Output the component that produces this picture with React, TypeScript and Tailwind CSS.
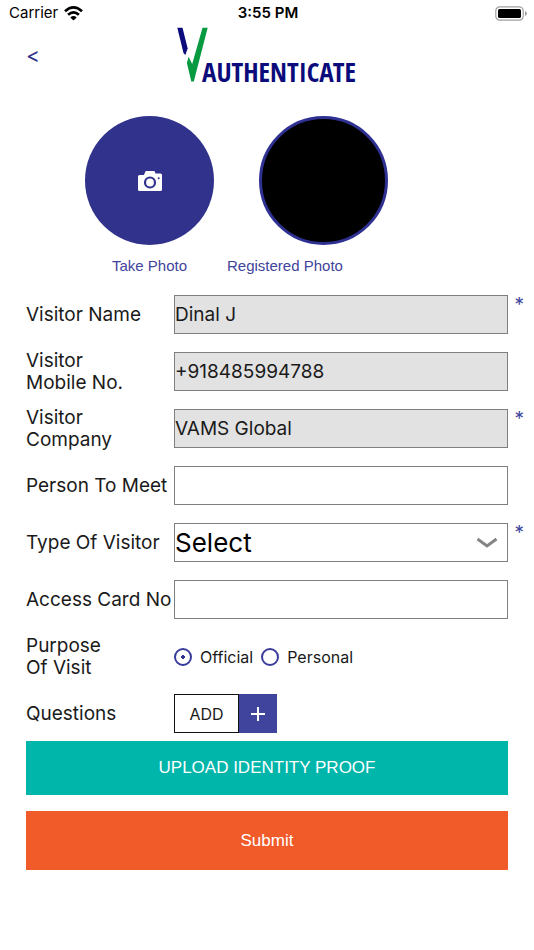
import React, { useState } from 'react';

const inputClass = 'block h-[39px] w-full rounded-none border border-[#7f7f7f] text-[19px] text-[#1a1a1a] outline-none';

interface RowProps {
    label: string;
    htmlFor?: string;
    required?: boolean;
    children: React.ReactNode;
}

const Row: React.FC<RowProps> = ({ label, htmlFor, required, children }) => (
    <div className="grid min-h-[45px] grid-cols-[148px_1fr] items-center">
        <label htmlFor={htmlFor} className="whitespace-pre-line text-[19px] leading-[22px] text-[#1a1a1a]">
            {label}
        </label>
        <div className="relative">
            {children}
            {required && (
                <span className="absolute -right-4 top-0 text-[19px] leading-[19px] text-[#3f449c]">*</span>
            )}
        </div>
    </div>
);

const StatusBar: React.FC = () => (
    <div className="grid h-[27px] grid-cols-3 items-center pl-[9px] pr-[7px] text-[15px] text-black">
        <div className="flex items-center gap-[6px]">
            <span>Carrier</span>
            <svg width="19" height="15" viewBox="0 0 19 15" fill="none" stroke="#000" strokeWidth="2.7" aria-label="Wi-Fi">
                <path d="M1 5.3 Q9.5 -2.4 18 5.3" />
                <path d="M4.1 8.7 Q9.5 3.9 14.9 8.7" />
                <path d="M6.3 11.4 Q9.5 8.8 12.7 11.4 L9.5 14.5 Z" fill="#000" stroke="none" />
            </svg>
        </div>
        <span className="text-center font-semibold">3:55 PM</span>
        <svg className="justify-self-end" width="32" height="15" viewBox="0 0 32 15" aria-label="Battery">
            <rect x="0.8" y="0.8" width="27.4" height="13.4" rx="4" fill="none" stroke="#a0a0a0" strokeWidth="1.2" />
            <rect x="3" y="3" width="23" height="9" rx="1.6" fill="#000" />
            <path d="M30 5 Q32 5.8 32 7.5 Q32 9.2 30 10 Z" fill="#a0a0a0" />
        </svg>
    </div>
);

const Logo: React.FC = () => (
    <svg width="182" height="66" viewBox="0 0 182 66" className="overflow-visible" role="img" aria-label="V Authenticate">
        <path d="M1.3 0.7 L6.5 0.7 L11.7 21.5 L9.3 28 L7.5 26 Z" fill="#0b0b7c" />
        <path d="M26.5 0.7 L31.7 0.7 L17.8 54.5 L15.3 54.5 L10.9 36 L12.6 29.7 L16.2 37 Z" fill="#079a41" />
        <text
            x="26"
            y="55"
            fill="#0b0b7c"
            className="font-['Open_Sans_Condensed','Roboto_Condensed',Roboto,sans-serif] text-[27px] font-bold"
        >
            AUTHENTICATE
        </text>
    </svg>
);

const PhotoSection: React.FC = () => (
    <div className="flex gap-[13px] pl-[85px] pt-[32px] font-['Liberation_Sans',Arial,sans-serif] text-[15px] text-[#3f449c]">
        <div className="flex flex-col items-center gap-[9px]">
            <button type="button" aria-label="Take Photo" className="flex size-[129px] items-center justify-center rounded-full bg-[#30328c]">
                <svg width="26" height="22" viewBox="0 0 26 22">
                    <path d="M7.5 3.5 L8.6 1.2 Q8.8 1 9.2 1 H17 Q17.4 1 17.6 1.2 L18.6 3.5 H23.5 Q25 3.5 25 5 V19.5 Q25 21 23.5 21 H2.5 Q1 21 1 19.5 V6.5 Q1 5 2.5 5 H7 Z" fill="#fff" />
                    <circle cx="13" cy="12.5" r="5" fill="#fff" stroke="#30328c" strokeWidth="2.2" />
                    <circle cx="21.7" cy="8.2" r="1" fill="#30328c" />
                </svg>
            </button>
            <span className="leading-6">Take Photo</span>
        </div>
        <div className="flex flex-col gap-[9px]">
            <div className="ml-8 size-[129px] rounded-full border-[3px] border-[#2f3192] bg-black" />
            <span className="leading-6">Registered Photo</span>
        </div>
    </div>
);

const radioClass = 'size-[18px] appearance-none rounded-full border-2 border-[#3a3c9c] checked:bg-[radial-gradient(circle,#30328c_2px,transparent_2px)]';

export default function App() {
    const [purpose, setPurpose] = useState('official');

    return (
        <div className="min-h-screen bg-white font-['Inter','Noto_Sans',sans-serif]">
            <StatusBar />
            <header className="grid h-[57px] grid-cols-[1fr_auto_1fr] items-start px-[26px]">
                <button type="button" aria-label="Back" className="mt-[16px] w-fit text-[21px] leading-[26px] text-[#30328c]">
                    &lt;
                </button>
                <Logo />
            </header>
            <PhotoSection />

            <form className="px-[26px] pb-20 pt-[14px]" onSubmit={(e) => e.preventDefault()}>
                <div className="flex flex-col gap-3">
                    <Row label="Visitor Name" htmlFor="name" required>
                        <input id="name" className={`${inputClass} bg-[#e2e2e2]`} defaultValue="Dinal J" readOnly />
                    </Row>
                    <Row label={'Visitor\nMobile No.'} htmlFor="mobile">
                        <input id="mobile" className={`${inputClass} bg-[#e2e2e2]`} defaultValue="+918485994788" readOnly />
                    </Row>
                    <Row label={'Visitor\nCompany'} htmlFor="company" required>
                        <input id="company" className={`${inputClass} bg-[#e2e2e2]`} defaultValue="VAMS Global" readOnly />
                    </Row>
                    <Row label="Person To Meet" htmlFor="person">
                        <input id="person" className={inputClass} />
                    </Row>
                    <Row label="Type Of Visitor" htmlFor="type" required>
                        <select id="type" className="block h-[39px] w-full appearance-none rounded-none border border-[#7f7f7f] bg-white text-[26px] leading-[34px] text-black outline-none">
                            <option>Select</option>
                        </select>
                        <svg className="pointer-events-none absolute right-[10px] top-[14px]" width="22" height="13" viewBox="0 0 22 13" fill="none" stroke="#858585" strokeWidth="3">
                            <path d="M1.5 2 L11 9 L20.5 2" />
                        </svg>
                    </Row>
                    <Row label="Access Card No" htmlFor="card">
                        <input id="card" className={inputClass} />
                    </Row>
                    <Row label={'Purpose\nOf Visit'}>
                        <div className="flex items-center gap-2 text-base text-[#1a1a1a]">
                            <label className="flex items-center gap-2">
                                <input
                                    type="radio"
                                    name="purpose"
                                    className={radioClass}
                                    checked={purpose === 'official'}
                                    onChange={() => setPurpose('official')}
                                />
                                Official
                            </label>
                            <label className="flex items-center gap-2">
                                <input
                                    type="radio"
                                    name="purpose"
                                    className={radioClass}
                                    checked={purpose === 'personal'}
                                    onChange={() => setPurpose('personal')}
                                />
                                Personal
                            </label>
                        </div>
                    </Row>
                    <Row label="Questions">
                        <div className="flex h-[39px]">
                            <button type="button" className="w-[65px] border border-[#111] bg-white text-base text-[#1a1a1a]">
                                ADD
                            </button>
                            <button type="button" aria-label="Add question" className="flex w-[38px] items-center justify-center bg-[#40449c]">
                                <svg width="14" height="14" viewBox="0 0 14 14" stroke="#fff" strokeWidth="2">
                                    <path d="M0 7 H14 M7 0 V14" />
                                </svg>
                            </button>
                        </div>
                    </Row>
                </div>
                <div className="mt-[5px] flex flex-col gap-4 font-['Liberation_Sans',Arial,sans-serif] text-[17px] text-white">
                    <button type="button" className="h-[54px] w-full bg-[#00b5aa]">
                        UPLOAD IDENTITY PROOF
                    </button>
                    <button type="submit" className="h-[59px] w-full bg-[#f15a29]">
                        Submit
                    </button>
                </div>
            </form>
        </div>
    );
}
